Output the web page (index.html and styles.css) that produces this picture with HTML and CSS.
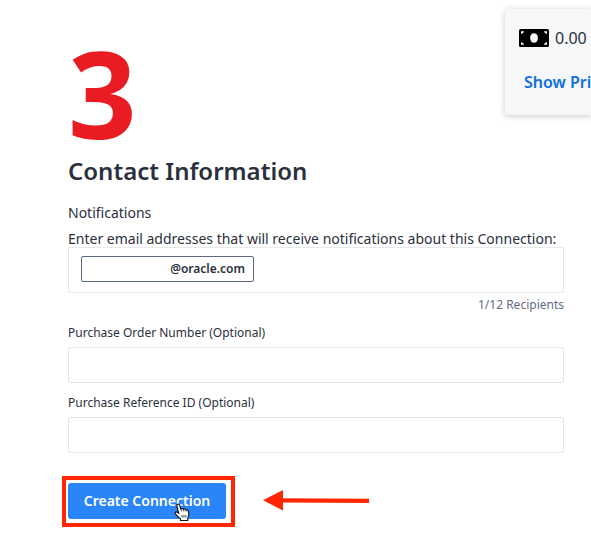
FILE: index.html
```html
<!DOCTYPE html>
<html lang="en">
<head>
<meta charset="utf-8">
<title>Contact Information</title>
<link rel="stylesheet" href="styles.css">
</head>
<body>
<main class="page">
  <div class="step">3</div>
  <h2 class="title">Contact Information</h2>
  <div class="section-label">Notifications</div>
  <div class="hint"><span>Enter email addresses that will receive notifications about this Connection:</span></div>
  <div class="recipients"><span class="chip">@oracle.com</span></div>
  <div class="count">1/12 Recipients</div>
  <label class="label" for="po">Purchase Order Number (Optional)</label>
  <input class="input" id="po" type="text">
  <label class="label" for="ref">Purchase Reference ID (Optional)</label>
  <input class="input" id="ref" type="text">
  <div class="actions">
    <div class="highlight">
      <button class="create" type="button">Create Connection</button>
      <svg class="cursor" width="17" height="19" viewBox="0 0 17 19">
        <path d="M3.2 1.6C4.3.5 5.500 1.400 5.800 2.500l1 3.400c1-.8 2.200-.5 2.600.3 1-.6 2.100-.3 2.500.6 1.200-.4 2.300.3 2.500 1.500l.4 2.700c.2 2-.7 3-1 4.200v2.300H6.500v-1.600C5 14.600 3.200 13 1.400 10.800c-.9-1.200.5-2.500 1.900-1.600l1.400 1L2.900 3.500c-.2-.8-.1-1.500.3-1.900z" fill="#fff" stroke="#111" stroke-width="1.100"/>
        <path d="M6.800 6l.8 2.500M9.400 6.500l.6 2M11.900 7l.4 1.500M7.800 12l.4 2.500M9.900 12l.1 2.500M11.900 12v2.500" fill="none" stroke="#111" stroke-width=".8"/>
      </svg>
    </div>
    <svg class="arrow" width="108" height="22" viewBox="0 0 108 22">
      <path d="M18 9.300l88 .5v4.200l-88-.6z" fill="#ff2600"/>
      <path d="M0 11.300L20 1v20.500z" fill="#ff2600"/>
    </svg>
  </div>
</main>
<aside class="price">
  <div class="amount">
    <svg width="30" height="18" viewBox="0 0 30 18">
      <rect width="30" height="18" rx="1.500" fill="#000"/>
      <ellipse cx="15" cy="9" rx="3.900" ry="4.800" fill="#f5f7f9"/>
      <path d="M2 2.200h3.200Q4.600 4.500 2 5zM28 2.200h-3.200Q25.400 4.500 28 5zM2 15.800h3.200Q4.600 13.500 2 13zM28 15.800h-3.200Q25.400 13.500 28 13z" fill="#f5f7f9"/>
    </svg>
    <span>0.00</span>
  </div>
  <div class="show">Show Pri</div>
</aside>
</body>
</html>
```
FILE: styles.css
```css
* { box-sizing: border-box; }
body {
  margin: 0;
  width: 591px;
  height: 550px;
  overflow: hidden;
  position: relative;
  background: #fff;
  color: #2b303c;
  font-family: "Noto Sans", sans-serif;
  font-size: 14px;
}
.page { width: 496px; margin-left: 68px; padding-top: 33px; }
.step {
  height: 121px;
  line-height: 120px;
  font-family: "Open Sans", sans-serif;
  font-size: 120px;
  font-weight: 700;
  color: #e91c24;
}
.title { margin: 0; height: 34px; line-height: 34px; font-size: 24px; font-weight: 600; }
.section-label { height: 20px; line-height: 20px; margin-top: 15px; }
.hint { height: 20px; line-height: 20px; margin-top: 6px; white-space: nowrap; }
.recipients {
  display: flex;
  align-items: flex-start;
  height: 46px;
  margin-top: -2px;
  padding: 8px 12px;
  border: 1px solid #e6e7e8;
  border-radius: 1px;
}
.chip {
  width: 173px;
  height: 26px;
  padding-right: 8px;
  border: 1px solid #5d6983;
  border-radius: 2px;
  font-size: 12px;
  font-weight: 600;
  line-height: 24px;
  text-align: right;
}
.count { height: 18px; line-height: 18px; margin-top: 3px; font-size: 12px; text-align: right; color: #626c86; }
.label { display: block; height: 18px; line-height: 18px; margin-top: 10px; font-size: 12px; }
.input {
  display: block;
  width: 100%;
  height: 36px;
  margin-top: 5px;
  border: 1px solid #e3e5e6;
  border-radius: 2px;
}
.input + .label { margin-top: 11px; }
.actions { display: flex; align-items: center; gap: 28px; margin: 23px 0 0 -6px; }
.highlight { position: relative; width: 173px; height: 51px; padding: 3px 2px; border: 4px solid #ff2600; }
.create {
  display: block;
  width: 158px;
  height: 36px;
  padding: 0;
  border: 0;
  border-radius: 3px;
  background: #2a85f8;
  color: #fff;
  font: 600 14px/36px "Noto Sans", sans-serif;
}
.cursor { position: absolute; left: 108px; top: 23px; }
.arrow { margin-bottom: 3px; }
.price {
  position: absolute;
  left: 505px;
  right: 0;
  top: 9px;
  height: 106px;
  padding: 18px 0 0 14px;
  border-radius: 4px 0 0 4px;
  background: #f5f7f9;
  box-shadow: 0 1px 6px rgba(0, 0, 0, .22);
}
.amount { display: flex; align-items: center; gap: 6px; height: 22px; font-size: 16px; }
.show { margin: 22px 0 0 5px; line-height: 22px; font-size: 16px; font-weight: 600; color: #0f6fde; white-space: nowrap; }
```
